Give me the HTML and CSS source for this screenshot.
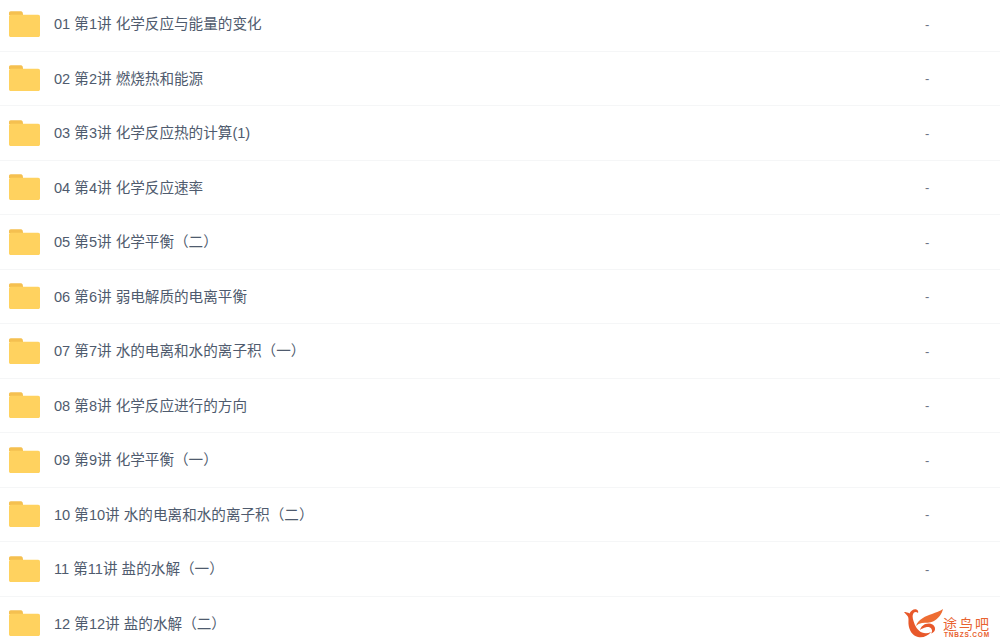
FILE: index.html
```html
<!DOCTYPE html>
<html lang="en">
<head>
    <meta charset="UTF-8">
    <meta name="viewport" content="width=device-width, initial-scale=1.0">
    <title>Files</title>
    <link rel="stylesheet" href="styles.css">
</head>
<body>
    <svg class="sprites" width="0" height="0">
        <symbol id="folder" viewBox="0 0 31 26">
            <path d="M0 2C0 1 .7.300 1.700.300h10c1 0 1.700.5 2 1.500l.4 2.200H0z" fill="#f5c050"/>
            <path d="M0 5.500c0-1 .8-1.800 1.800-1.800h27.400c1 0 1.800.8 1.800 1.800v18.700c0 1-.8 1.800-1.800 1.800H1.800C.8 26 0 25.200 0 24.200z" fill="#ffd25f"/>
        </symbol>
    </svg>

    <ul class="file-list">
        <li class="file-row"><svg class="folder-icon"><use href="#folder"/></svg><span class="file-name">01 第1讲 化学反应与能量的变化</span><span class="file-size">-</span></li>
        <li class="file-row"><svg class="folder-icon"><use href="#folder"/></svg><span class="file-name">02 第2讲 燃烧热和能源</span><span class="file-size">-</span></li>
        <li class="file-row"><svg class="folder-icon"><use href="#folder"/></svg><span class="file-name">03 第3讲 化学反应热的计算(1)</span><span class="file-size">-</span></li>
        <li class="file-row"><svg class="folder-icon"><use href="#folder"/></svg><span class="file-name">04 第4讲 化学反应速率</span><span class="file-size">-</span></li>
        <li class="file-row"><svg class="folder-icon"><use href="#folder"/></svg><span class="file-name">05 第5讲 化学平衡（二）</span><span class="file-size">-</span></li>
        <li class="file-row"><svg class="folder-icon"><use href="#folder"/></svg><span class="file-name">06 第6讲 弱电解质的电离平衡</span><span class="file-size">-</span></li>
        <li class="file-row"><svg class="folder-icon"><use href="#folder"/></svg><span class="file-name">07 第7讲 水的电离和水的离子积（一）</span><span class="file-size">-</span></li>
        <li class="file-row"><svg class="folder-icon"><use href="#folder"/></svg><span class="file-name">08 第8讲 化学反应进行的方向</span><span class="file-size">-</span></li>
        <li class="file-row"><svg class="folder-icon"><use href="#folder"/></svg><span class="file-name">09 第9讲 化学平衡（一）</span><span class="file-size">-</span></li>
        <li class="file-row"><svg class="folder-icon"><use href="#folder"/></svg><span class="file-name">10 第10讲 水的电离和水的离子积（二）</span><span class="file-size">-</span></li>
        <li class="file-row"><svg class="folder-icon"><use href="#folder"/></svg><span class="file-name">11 第11讲 盐的水解（一）</span><span class="file-size">-</span></li>
        <li class="file-row"><svg class="folder-icon"><use href="#folder"/></svg><span class="file-name">12 第12讲 盐的水解（二）</span><span class="file-size">-</span></li>
    </ul>

    <div class="watermark">
        <svg class="watermark-logo" viewBox="0 0 39 29">
            <path d="M0 3c2 0 4 .5 5.500 1.500C7 1.500 10-.500 12.500.500c1.500.5 2 2 1.500 3.500-1-1-2.500-1.500-4-.5C8 6 8.500 9 9.500 12c1.500 5 4 9.500 8.500 11.500 3 1.200 6 1 9-.5-3 4-8 6-13 5C8 26.500 5 21 4.500 15 4.300 11 5 9 3.500 7 2.500 5.500 1 4.500 0 3z" fill="#e8582a"/>
            <path d="M12 17C14 10 22 7 28 5c4-1.500 8-3 11-5-1 5-5 10-10 12.500-3 1.500-7 1-11 1.500-2.500.5-4.500 1.300-6 3z" fill="#ee6d33"/>
            <path d="M16 21c1-4 5-7 9.500-6.500 3.500.5 6 3 5.500 6-.3 2-2 3.500-4 4 1-1.500 1.500-3 .5-4.500-1-1.800-3.500-2.300-5.500-1.700-2.500.6-4.500 1.500-6 2.700z" fill="#e8582a"/>
        </svg>
        <div class="watermark-text">
            <span class="watermark-name">途鸟吧</span>
            <span class="watermark-url">TNBZS.COM</span>
        </div>
    </div>
</body>
</html>
```

FILE: styles.css
```css
body {
    margin: 0;
    height: 644px;
    overflow: hidden;
    background: #fff;
    font-family: "Liberation Sans", "Noto Sans CJK SC", sans-serif;
    color: #4f5b6e;
    position: relative;
}

.sprites {
    display: block;
    height: 0;
}

.file-list {
    list-style: none;
    margin: -3px 0 0;
    padding: 0;
}

.file-row {
    display: flex;
    align-items: center;
    box-sizing: border-box;
    height: 54.5px;
    padding-left: 9px;
    border-bottom: 1px solid #f5f6f7;
}

.folder-icon {
    width: 31px;
    height: 26px;
    flex: none;
}

.file-name {
    margin-left: 14px;
    padding-top: 1px;
    font-size: 14.6px;
    line-height: 20px;
    flex: 1;
}

.file-size {
    width: 75px;
    padding-top: 1px;
    font-size: 13px;
    color: #6b7483;
}

.watermark {
    position: absolute;
    right: 9px;
    bottom: 5px;
    display: flex;
    align-items: flex-end;
    background: #fff;
}

.watermark-logo {
    width: 39px;
    height: 29px;
    margin-bottom: 1px;
}

.watermark-text {
    display: flex;
    flex-direction: column;
    align-items: center;
    color: #e8622f;
}

.watermark-name {
    font-size: 14px;
    line-height: 14px;
    letter-spacing: 2px;
}

.watermark-url {
    font-size: 6.500px;
    line-height: 8px;
    font-weight: bold;
    letter-spacing: .8px;
}
```
